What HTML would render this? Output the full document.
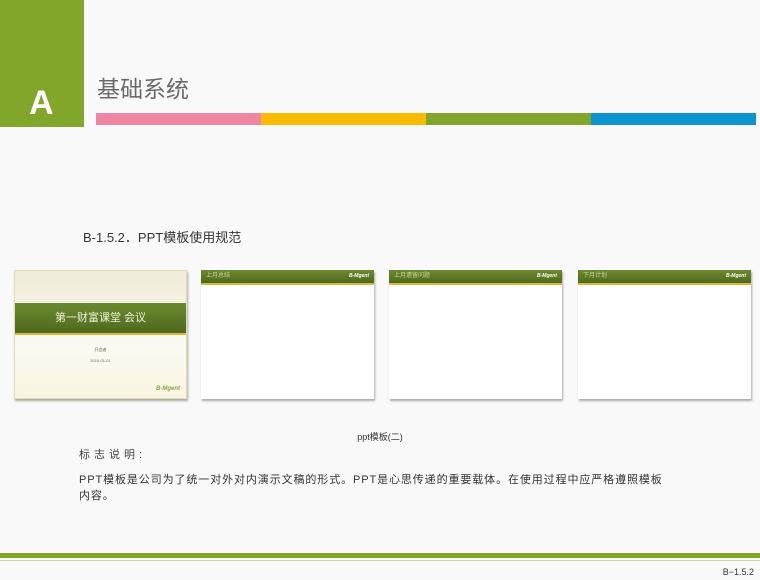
<!DOCTYPE html>
<html><head><meta charset="utf-8"><style>
body{margin:0;width:760px;height:580px;background:#f9f9f9;position:relative;overflow:hidden;font-family:"Liberation Sans","Noto Sans CJK SC",sans-serif;}
.a{position:absolute}
.thumb{position:absolute;top:270px;width:173px;height:129px;background:#fff;box-shadow:1px 2px 2px #aaa;}
.hd{height:13px;background:linear-gradient(#6b8a2e,#4c6a1c);border-bottom:2px solid #e3b43c;position:relative;color:#c8d8a0;font-size:6px;line-height:13px;padding-left:5px}
.hd i{position:absolute;right:5px;top:0;font-style:italic;font-weight:bold;color:#fff;font-size:5px}
</style></head><body>
<div class="a" style="left:0;top:0;width:84px;height:127px;background:#82a62a"></div>
<div class="a" style="left:29px;top:84px;color:#fff;font-size:34px;font-weight:bold">A</div>
<div class="a" style="left:97px;top:70px;color:#6a6a6a;font-size:23px">基础系统</div>
<div class="a" style="left:96px;top:113px;width:165px;height:12px;background:#ee87a3"></div>
<div class="a" style="left:261px;top:113px;width:165px;height:12px;background:#fbbb00"></div>
<div class="a" style="left:426px;top:113px;width:165px;height:12px;background:#82a62a"></div>
<div class="a" style="left:591px;top:113px;width:165px;height:12px;background:#0a95d0"></div>
<div class="a" style="left:83px;top:227px;color:#333;font-size:13px">B-1.5.2．PPT模板使用规范</div>

<div class="thumb" style="left:14px;background:linear-gradient(#efebd8,#fbfaf2 60%,#f8f4e0);border:1px solid #e6dcb0;width:171px;height:127px">
 <div class="a" style="left:0;top:32px;width:171px;height:30px;background:linear-gradient(#6b8a2e,#4c6a1c);border-bottom:2px solid #e3b43c;color:#eef2d8;font-size:11px;text-align:center;line-height:30px">第一财富课堂 会议</div>
 <div class="a" style="left:0;top:76px;width:171px;text-align:center;font-size:4px;color:#666">开会者<br><br>2010-01-01</div>
 <div class="a" style="right:6px;bottom:6px;font-size:6px;font-style:italic;font-weight:bold;color:#8aa84a">B-Mgent</div>
</div>
<div class="thumb" style="left:201px"><div class="hd">上月总结<i>B-Mgent</i></div></div>
<div class="thumb" style="left:389px"><div class="hd">上月遗留问题<i>B-Mgent</i></div></div>
<div class="thumb" style="left:578px"><div class="hd">下月计划<i>B-Mgent</i></div></div>

<div class="a" style="left:0;top:430px;width:760px;text-align:center;font-size:9px;color:#333">ppt模板(二)</div>
<div class="a" style="left:79px;top:446px;font-size:11px;color:#444;letter-spacing:4px">标志说明:</div>
<div class="a" style="left:79px;top:472px;width:640px;font-size:11px;color:#333;line-height:16px;white-space:nowrap;letter-spacing:0.9px">PPT模板是公司为了统一对外对内演示文稿的形式。PPT是心思传递的重要载体。在使用过程中应严格遵照模板<br>内容。</div>
<div class="a" style="left:0;top:553px;width:760px;height:5px;background:#82a62a"></div>
<div class="a" style="left:0;top:560px;width:760px;height:1px;background:#c8d8a0"></div>
<div class="a" style="right:6px;top:567px;font-size:9px;color:#333">B−1.5.2</div>
</body></html>
